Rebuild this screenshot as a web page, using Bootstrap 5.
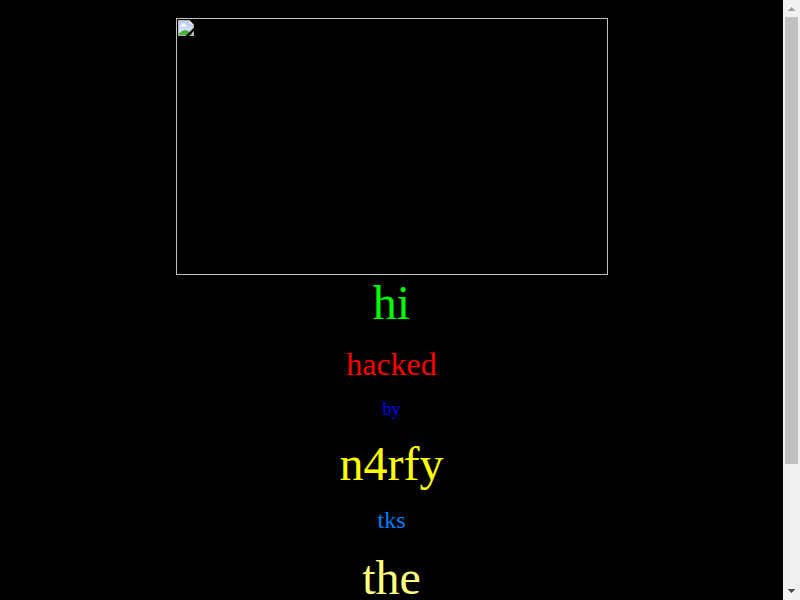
<!DOCTYPE html>
<html lang="en">
<head>
<meta charset="utf-8">
<meta name="viewport" content="width=device-width, initial-scale=1">
<title>hi</title>
<link href="https://cdn.jsdelivr.net/npm/bootstrap@5.3.0/dist/css/bootstrap.min.css" rel="stylesheet">
<style>
  body { background: #000; font-family: "Liberation Serif", "Times New Roman", serif; line-height: normal; }
  .stage { padding-top: 18px; }
  .picture { width: 432px; height: 257px; border: 1px solid #c0c0c0; padding: 1px; }
  .picture svg { display: block; }
  .line { margin: 0 0 16px; }
  .s48 { font-size: 48px; } .s32 { font-size: 32px; } .s24 { font-size: 24px; } .s18 { font-size: 18px; }
  .green { color: #0f0; } .red { color: #f00; } .blue { color: #00f; }
  .yellow { color: #ff0; } .azure { color: #0080ff; } .cream { color: #ffff80; }
  .scroller { width: 17px; background: #f1f1f1; }
  .scroller svg { display: block; }
  .thumb { width: 13px; height: 447px; background: #c1c1c1; }
</style>
<script src="https://cdn.jsdelivr.net/npm/bootstrap@5.3.0/dist/js/bootstrap.bundle.min.js"></script>
</head>
<body class="vh-100 overflow-hidden d-flex">
  <main class="stage flex-grow-1 vh-100 overflow-hidden text-center">
    <div class="picture mx-auto">
      <svg width="16" height="16" viewBox="0 0 16 16">
        <defs>
          <linearGradient id="sky" x1="0" y1="0" x2="0" y2="1">
            <stop offset="0" stop-color="#b8cdf6"/><stop offset="1" stop-color="#dfe9fc"/>
          </linearGradient>
        </defs>
        <path d="M0 0h11l5 5v11H0z" fill="#b4b4b4"/>
        <path d="M1 1h10v4h4v10H1z" fill="#fff"/>
        <path d="M1 1h10v4h4v10H1z" fill="url(#sky)"/>
        <path d="M3 6.500V5l1-.5L5 3.500h1.500l1 1L8 5v1.500z" fill="#fff"/>
        <path d="M1 15v-1.500Q4 10 7 10t8 5z" fill="#4fae3a"/>
        <path d="M11 0l5 5h-5z" fill="#f4f4f4" stroke="#999" stroke-width=".5"/>
        <path d="M7.500 16L16 7.500V11l-5 5z" fill="#000"/>
      </svg>
    </div>
    <p class="line s48 green">hi</p>
    <p class="line s32 red">hacked</p>
    <p class="line s18 blue">by</p>
    <p class="line s48 yellow">n4rfy</p>
    <p class="line s24 azure">tks</p>
    <p class="line s48 cream">the</p>
  </main>
  <aside class="scroller vh-100 flex-shrink-0 d-flex flex-column align-items-center">
    <svg width="17" height="17" shape-rendering="crispEdges"><path d="M8 7h1v1h1v1h1v1h1v1H5v-1h1V9h1V8h1z" fill="#a3a3a3"/></svg>
    <div class="thumb"></div>
    <svg class="mt-auto" width="17" height="17" shape-rendering="crispEdges"><path d="M5 6h7v1h-1v1h-1v1H9v1H8V9H7V8H6V7H5z" fill="#505050"/></svg>
  </aside>
</body>
</html>
